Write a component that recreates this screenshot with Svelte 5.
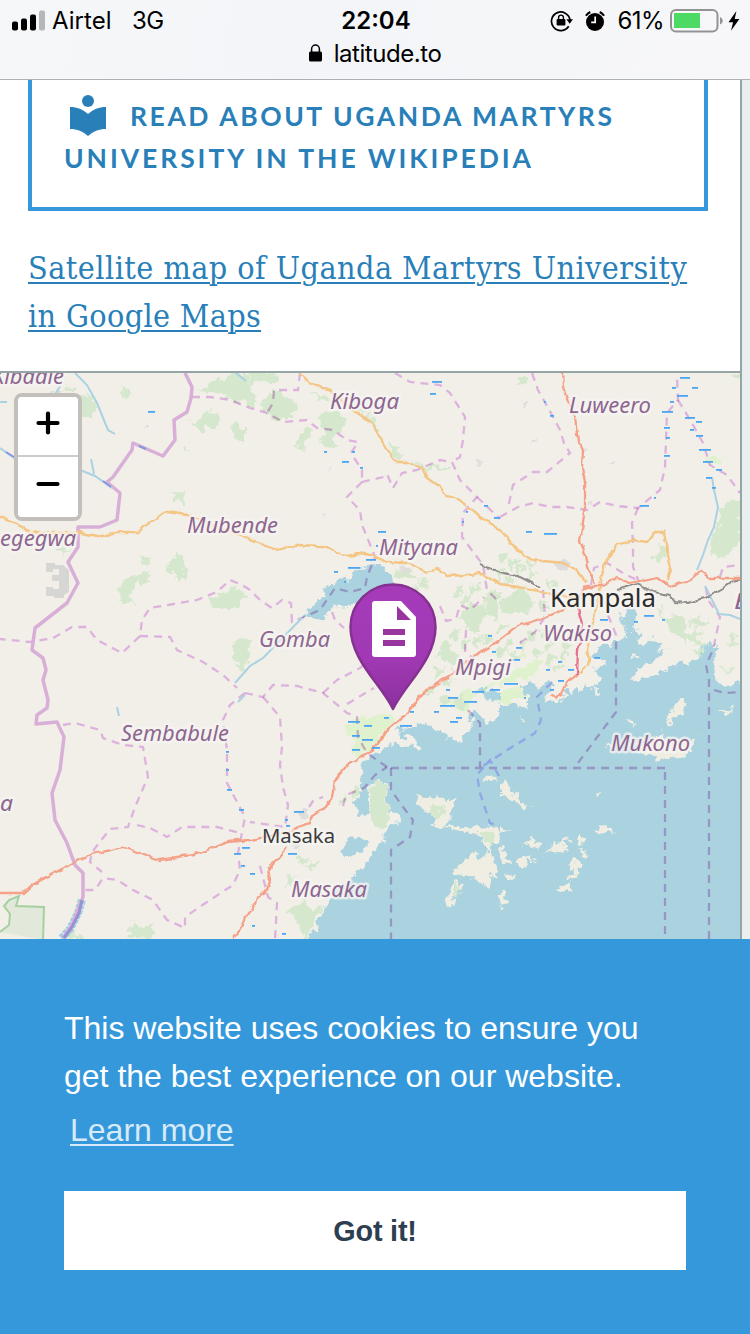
<script>
  const water = [
    '313,939 317,923 328,902 339,889 350,880 367,863 383,840 393,823 402,822 400,815 388,810 386,797 385,782 378,778 368,787 368,800 371,812 360,815 356,803 361,790 360,780 362,763 375,753 382,747 397,745 411,748 420,747 413,737 400,737 398,728 412,727 423,723 430,727 437,730 450,738 462,740 472,728 468,713 474,709 480,712 487,725 500,713 500,705 512,704 527,707 527,698 522,688 527,680 535,682 538,690 550,677 555,687 543,698 548,702 558,702 567,692 575,685 580,693 587,683 593,688 595,697 600,693 592,687 603,680 593,670 607,663 598,658 593,658 603,643 612,644 623,640 626,630 620,622 628,608 637,610 633,630 640,632 638,643 644,644 653,638 662,647 650,658 635,654 632,659 645,654 667,652 660,656 653,663 637,668 632,682 647,678 663,670 673,665 687,663 698,655 700,647 710,641 718,650 712,663 717,685 730,687 740,680 740,939',
    '383,567 392,575 394,590 360,602 350,607 334,606 330,610 327,618 302,618 318,600 333,583 342,578 347,580 357,570 370,566',
    '356,837 368,840 367,848 356,855 345,856 342,849 348,839',
    '362,791 368,800 371,812 362,815 356,806',
    '484,688 500,694 500,704 486,698 476,692'
  ];
  const islands = [
    '416,795 426,797 437,795 445,800 452,800 460,796 455,806 449,811 450,821 447,826 468,826 480,829 491,826 499,831 500,841 492,842 490,852 493,859 498,878 492,876 487,888 484,884 477,881 470,876 457,875 454,870 464,860 473,857 478,850 481,862 487,851 484,840 476,832 463,833 447,827 430,827 436,822 431,812 421,808',
    '457,878 464,889 455,888 452,906 444,901 449,890',
    '500,782 508,783 514,791 520,802 529,804 528,810 520,808 510,798 500,796',
    '528,834 540,846 539,847 532,846 521,845 532,842',
    '551,840 557,844 568,838 570,840 562,845 570,849 558,851 545,854 553,848',
    '580,832 585,840 582,846 578,842', '598,829 604,826 613,828 612,834 606,831 599,835',
    '579,850 588,854 598,843 590,852 584,857', '577,857 584,864 577,869 578,880 567,879 572,869 566,866 574,864',
    '555,891 565,884 571,882 568,892 556,892', '518,860 528,856 537,861 526,861 523,869 518,865',
    '504,876 518,873 513,881 504,880', '500,824 509,832 500,834', '500,844 507,855 509,864 501,863',
    '500,892 508,892 503,908 500,906', '594,794 599,793 605,798 595,796',
    '681,699 689,703 683,707 684,715 675,718 670,727 666,714 672,714 673,705',
    '662,730 668,740 691,741 697,738 690,752 677,759 664,757 653,759 641,753 632,748 655,742', '604,745 613,744 611,748',
    '720,711 735,706 732,712 722,713', '628,720 634,721 637,725 631,724', '517,720 524,718 526,720 520,721',
    '483,780 490,775 497,780 490,783'
  ];
  const forest = [
    '196,389 210,384 221,378 231,374 249,373 251,398 240,404 228,396 215,394 205,393',
    '191,422 200,419 208,412 214,411 219,422 213,428 206,425 202,433 194,425',
    '232,426 239,423 243,427 249,427 239,442 232,434', '250,373 281,373 272,383 257,380 250,386',
    '265,396 274,390 297,402 294,413 280,423 270,415 262,407', '250,390 258,402 256,409 250,408', '310,391 328,395 330,403 320,398',
    '317,420 323,413 341,412 345,422 341,432 333,439 338,446 329,449 318,440 326,432 322,426',
    '302,427 312,430 308,442 303,448 296,446', '356,407 368,414 379,430 377,434 364,417', '388,443 400,450 399,461 391,455',
    '412,462 430,466 444,467 454,465 451,470 425,470', '78,396 87,393 97,402 92,415 81,419', '66,386 73,385 74,389 65,392',
    '119,389 125,391 131,389 130,395 124,397', '183,447 187,445 189,450 184,451', '172,493 186,492 183,497 184,506 178,500 172,501',
    '177,551 184,561 186,582 177,577 165,568 172,561', '122,582 130,576 149,573 147,584 138,582 131,590 133,605 120,600',
    '140,556 147,556 151,565 141,562', '209,597 221,594 236,586 246,595 240,608 229,611 213,609',
    '232,643 250,638 250,662 241,659 233,650', '234,650 250,650 243,672 237,664', '54,547 70,549 66,552 54,551',
    '738,500 728,502 720,512 719,525 711,538 709,550 720,557 735,549 740,540 740,500', '732,373 740,373 740,380 733,377',
    '658,543 665,549 665,557 660,560 651,559 658,554', '518,376 526,378 526,384 519,385',
    '500,600 520,588 536,604 528,613 510,614 500,607', '471,604 480,603 490,612 482,622 478,635 468,630 460,615',
    '378,778 385,784 385,799 389,814 388,827 372,824 371,800 368,789', '304,900 311,910 323,907 312,922 310,939 303,939 298,919 287,910',
    '126,937 133,921 143,928 156,924 149,939', '431,806 445,806 440,814 435,820 430,812', '478,832 493,833 493,841 491,847 483,837',
    '456,880 463,890 455,896', '67,939 72,932 85,939', '435,655 450,647 460,655 452,669 445,661',
    '455,700 462,694 467,705 459,711', '690,620 700,616 710,625 695,630', '660,617 680,616 690,625 684,631 700,641 711,644 700,646 675,634',
    '726,643 733,636 739,644 730,648', '569,876 578,871 577,875', '720,667 735,669 728,673',
    '394,568 411,571 420,583 410,579 398,579', '487,604 499,590 496,624 490,618'
  ];
  const marsh = [
    '352,719 390,713 396,720 384,731 374,746 361,756 352,756 354,741 346,730', '452,701 464,690 478,691 493,682 505,674 519,668 540,659 545,663 526,679 507,682 492,686 475,695 468,710 457,710',
    '500,690 521,688 526,699 516,697 508,704 500,701', '706,457 724,459 717,464 706,462', '516,658 523,649 528,658'
  ];
  const wood = [
    [458,590],[467,597],[474,587],[486,600],[492,593],[455,634],[465,642],[446,646],[452,662],[477,641],[488,637],[500,651],[508,642],[513,655],[524,643],[532,634],[537,652],[548,645],[550,659],[556,667],[564,654],[567,645],[545,632],[500,627],[670,620],[681,626],[687,637],[696,634],[503,556],[512,562],[519,568],[530,565],[532,575],[499,572],[507,580],[542,606],[550,582],[424,582],[415,588],[445,699],[431,690],[448,681],[438,671],[343,798],[355,792],[303,860],[312,865],[290,880],[660,610],[699,650]
  ];
  const dashes = [
    '192,397 210,397 230,400 250,408 267,413 283,422 307,420 317,428 333,430 347,440 358,442 351,453 362,470 362,482',
    '300,373 298,390 274,390 273,403 267,413',
    '362,482 383,477 387,474 393,488 402,473 417,470 440,460 452,462 460,480 477,497 463,513 462,537 483,565 487,590 497,600',
    '395,373 410,382 440,385 450,393 465,417 463,440 460,457 452,462', '477,497 500,519',
    '362,482 347,497 360,510 362,525 367,537 375,557 367,577 365,588 350,592 335,588 320,610 292,622 291,603 282,600 272,608 260,600 250,590 242,585 230,580 217,592 197,600 150,608 142,620 140,636 122,653 97,640 87,627 72,627 53,638 30,642 0,639',
    '140,636 170,637 177,650 203,662 223,675 237,688', '332,612 335,620 344,628', '440,606 446,621 456,619 460,605 470,610 484,597',
    '245,693 230,705 223,720 227,750 227,783 245,817 238,853 240,870 233,885 207,902 185,917 185,928 167,920 153,900 133,890 117,880 103,878 95,890 83,890',
    '63,725 75,723 100,730 103,738 123,745 143,747 148,777 135,807 128,827 110,829 92,852 90,862 102,872', '137,825 150,828 167,837 182,827 217,827 240,833',
    '245,693 263,697 273,685 297,686 323,693 347,713 357,717 358,737 367,753 387,767', '323,693 337,680 360,668 372,658', '347,704 374,688',
    '263,697 280,717 282,747 280,765 283,787 288,805 285,827 250,822', '343,806 346,795 364,788 375,775 387,767', '309,807 313,801 323,797', '260,866 268,897 277,903 275,939',
    '391,768 665,768', '391,768 391,790 403,807 413,820 410,837 391,850 391,939', '665,772 665,939', '709,939 709,680 706,665 713,650 720,617 708,600 705,583',
    '608,615 616,635 616,712 595,740 575,767', '468,710 480,723 480,767', '714,690 725,693 740,692',
    '532,373 538,390 552,415 560,430 564,443 570,453 547,472 533,472 513,485 508,508', '500,517 518,507 533,503 550,507 567,507 587,510 600,502 617,506 638,508 660,490 665,467 667,413 678,400 677,377',
    '678,400 692,423 703,443 710,465 727,475 740,493', '638,508 632,523 633,547 633,567 639,582', '591,585 594,568 607,563 623,573 637,580', '543,590 545,617 535,632 517,645', '720,577 723,567 740,565',
    '466,630 465,652 475,660'
  ];
  const blueDashes = ['499,776 490,760 477,775 480,793 490,823 500,826', '552,682 537,697 541,720 535,733 507,750 480,768'];
  const borders = ['185,373 192,387 191,398 187,412 174,420 175,440 163,456 133,443 132,450 113,477 107,482 120,493 117,520 100,527 78,527 78,547 68,562 78,583 67,603 35,628 32,650 43,658 46,670 43,680 48,700 47,708 37,715 36,724 57,722 64,737 60,770 52,793 55,820 67,843 75,865 83,873 83,897 72,925 63,938'];
  const rivers = ['75,373 87,385 97,403 108,430 115,434', '0,448 17,460 50,461 80,470 95,476 112,488', '55,395 60,386', '0,402 7,402', '91,459 94,474', '302,618 263,658 250,666 235,683', '712,477 714,490 718,507 714,527 708,540 703,555 697,570', '238,702 245,695', '117,707 119,716', '705,586 719,614 730,615 740,619', '236,373 246,381'];
  const orange = [
    '300,373 310,383 332,392 353,410 372,423 383,443 395,462 408,462 422,468 427,478 438,486 447,495 457,498 480,517 500,529 517,550 532,560 563,563 577,570 587,583',
    '0,517 17,523 30,533 80,533 103,537 117,532 138,532 150,522 167,512 187,515 205,522 240,535 250,540 278,550 297,545 323,546 347,556 367,553 387,562 407,563 427,572 438,569 447,576 483,574 500,584 523,588 550,594 577,597',
    '600,583 605,563 617,545 633,540 647,542 655,532 664,532 667,550 671,567 667,580', '600,585 597,605 590,635 587,650 590,657 588,665 580,674'
  ];
  const red = [
    '562,373 563,387 568,402 575,417 578,442 583,450 582,467 585,483 585,510 580,542 584,550 587,567 595,583', '583,588 595,585 603,585 617,578 630,583 657,577 670,586 690,580 700,571 710,578 740,578',
    '595,586 583,590 577,603 557,612 543,618 518,626 500,640 475,655 453,674 438,683 423,693 405,715 387,730 370,753 347,765 335,780 332,797 323,810 313,815 310,823 298,827 290,832 250,840 227,842 200,853 160,860 123,847 93,854 73,863 32,885 23,893 0,893',
    '287,848 268,870 270,880 265,892 257,897 255,905 248,912 242,927 232,938', '577,675 567,682 562,693 555,698 551,695'
  ];
  const rail = ['480,565 500,572 520,577 540,587', '617,590 637,584 653,592 670,595 675,602 687,603 707,597 723,588 733,581 740,579'];
  const marks = [
    [432,382,10],[430,394,6],[680,378,10],[692,388,6],[672,388,4],[677,396,11],[670,402,4],[662,412,11],[685,418,10],[696,422,6],[664,428,6],[690,430,4],[696,436,7],[666,438,4],[699,450,12],[703,462,10],[664,456,6],[716,470,6],[706,478,6],[712,488,4],[640,506,9],[654,498,2],[544,402,2],[550,416,4],[544,534,13],[526,532,6],[484,506,4],[494,518,6],[466,512,2],[462,522,2],[378,532,8],[376,546,2],[366,560,10],[348,568,12],[334,572,4],[344,582,2],[352,452,3],[342,462,7],[360,468,3],[324,452,3],[148,412,7],[644,616,10],[634,622,4],[600,620,8],[662,620,3],[738,606,4],[488,636,4],[492,652,4],[516,648,6],[512,660,8],[504,684,14],[472,692,12],[464,702,13],[448,698,10],[440,706,15],[434,712,5],[456,718,6],[450,722,8],[410,712,4],[384,718,5],[348,722,12],[364,726,8],[352,736,8],[362,740,11],[352,750,8],[372,748,8],[400,726,12],[446,690,4],[490,690,10],[546,670,4],[558,662,4],[568,670,6],[550,690,4],[558,681,6],[524,698,2],[594,658,6],[294,812,10],[285,820,3],[286,826,4],[288,854,9],[234,854,7],[242,848,8],[241,866,4],[226,752,3],[226,770,3],[227,790,5],[239,810,5],[250,874,5],[252,926,3],[282,934,4]
  ];
  const towns = [[57,393,8],[145,428,5],[404,570,10],[330,468,4],[324,514,4],[478,463,6],[524,405,5],[585,451,5],[590,503,5],[562,567,16],[303,815,12],[296,842,14],[612,463,4],[535,442,4]];
  const labels = [
    ['Kibadie', -8, 384, 72, 'd'], ['Kiboga', 330, 409, 69, 'd'], ['Luweero', 569, 413, 82, 'd'], ['Mubende', 187, 533, 91, 'd'],
    ['Mityana', 379, 555, 79, 'd'], ['egegwa', 0, 546, 76, 'd'], ['Gomba', 259, 647, 71, 'd'], ['Wakiso', 543, 641, 69, 'd'],
    ['Mpigi', 455, 675, 56, 'd'], ['Sembabule', 121, 741, 108, 'd'], ['Mukono', 611, 751, 79, 'd'], ['Masaka', 291, 897, 76, 'd'],
    ['a', 0, 811, 13, 'd'], ['B', 734, 609, 16, 'd'], ['Kampala', 550, 607, 106, 'city'], ['Masaka', 262, 843, 73, 'town']
  ];
</script>

<div class="screen">
  <header>
    <div class="status">
      <div class="carrier">
        <svg width="34" height="22" viewBox="0 0 34 22"><rect x="0" y="11.500" width="6" height="9" rx="2"/><rect x="9" y="8.500" width="6" height="12" rx="2"/><rect x="18" y="4.500" width="6" height="16" rx="2"/><rect x="27" y="0.500" width="6" height="20" rx="2" fill="#b5b7b9"/></svg>
        <span class="airtel">Airtel</span><span class="net">3G</span>
      </div>
      <b class="time">22:04</b>
      <div class="indicators">
        <svg class="lockrot" width="24" height="24" viewBox="0 0 24 24"><path d="M18.7 17.2A9.300 9.300 0 1 1 20 11" fill="none" stroke="#000" stroke-width="1.700"/><path d="M16.400 10.300h6.600l-3.300 4.400z"/><rect x="6.600" y="10" width="8.800" height="6.500" rx="1"/><path d="M8.600 10.500V8.500a2.400 2.400 0 0 1 4.800 0v2" fill="none" stroke="#000" stroke-width="1.400"/></svg>
        <svg class="alarm" width="20" height="22" viewBox="0 0 20 22"><circle cx="10" cy="12" r="9"/><path d="M.9 5.700A10.600 10.600 0 0 1 5.300 2M14.700 2a10.600 10.600 0 0 1 4.400 3.700" fill="none" stroke="#000" stroke-width="2"/><path d="M10.200 6.500v5.800H6.200" fill="none" stroke="#fff" stroke-width="1.700"/></svg>
        <span class="percent">61%</span>
        <svg class="battery" width="54" height="24" viewBox="0 0 54 24"><rect x="1" y="1" width="46.500" height="21.500" rx="5" fill="none" stroke="#929395" stroke-width="2"/><rect x="4" y="4" width="26" height="15" fill="#4cd964"/><path d="M50 8c3.600 1.800 3.600 6 0 7.500z" fill="#929395"/></svg>
        <svg class="bolt" width="12" height="20" viewBox="0 0 12 20"><path d="M8.400 0L.5 11.200h4.600L3 19.700 11.400 8H6.700z"/></svg>
      </div>
    </div>
    <div class="address">
      <svg width="13" height="18" viewBox="0 0 13 18"><rect y="7.500" width="13" height="10" rx="1.600"/><path d="M2.600 8V5a3.900 3.900 0 0 1 7.800 0v3" fill="none" stroke="#000" stroke-width="1.500"/></svg>
      <span>latitude.to</span>
    </div>
  </header>

  <main>
    <a class="wiki" href="#wiki">
      <span class="line first"><svg width="36" height="41" viewBox="0 0 36 41"><circle cx="18" cy="6" r="6"/><path d="M0 12c7 0 13 2.500 18 7 5-4.500 11-7 18-7v22c-7 0-13 2.500-18 7-5-4.500-11-7-18-7z"/></svg><span class="w1">READ ABOUT UGANDA MARTYRS</span></span>
      <span class="line w2">UNIVERSITY IN THE WIKIPEDIA</span>
    </a>
    <a class="satellite" href="#map"><span class="s1">Satellite map of Uganda Martyrs University</span><br /><span class="s2">in Google Maps</span></a>

    <section class="map">
      <svg class="tiles" width="740" height="566" viewBox="0 373 740 566">
        <defs>
          <linearGradient id="pin" x2="0" y2="1"><stop stop-color="#a63bba"/><stop offset="0.6" stop-color="#a039b3"/><stop offset="1" stop-color="#8d309e"/></linearGradient>
          <filter id="rough" filterUnits="userSpaceOnUse" x="-10" y="363" width="760" height="600"><feTurbulence type="fractalNoise" baseFrequency="0.13" numOctaves="3" seed="4"/><feDisplacementMap in="SourceGraphic" scale="13" xChannelSelector="R" yChannelSelector="G"/></filter>
          <filter id="wobble" filterUnits="userSpaceOnUse" x="-10" y="363" width="760" height="600"><feTurbulence type="fractalNoise" baseFrequency="0.12" numOctaves="2" seed="9"/><feDisplacementMap in="SourceGraphic" scale="5" xChannelSelector="R" yChannelSelector="G"/></filter>
          <clipPath id="frame"><rect y="373" width="740" height="566"/></clipPath>
        </defs>
        <rect y="373" width="740" height="566" fill="#f2efe9"/>
        <g clip-path="url(#frame)">
          <g filter="url(#rough)">
            {#each marsh as p}<polygon points={p} fill="#e0f2cd"/>{/each}
            {#each water as p}<polygon points={p} fill="#aad3df"/>{/each}
            <path d="M312 936H750V960H304zM738 680h12v260h-12z" fill="#aad3df"/>
            {#each islands as p}<polygon points={p} fill="#f0eee2"/>{/each}
            {#each forest as p}<polygon points={p} fill="#d5e8cd"/>{/each}
            {#each wood as [x, y]}<path d="M{x - 4} {y}l3-4 3 3 4-3-2 6-3 1-1 5-3-3z" fill="#d5e8cd"/>{/each}
            {#each towns as [x, y, s]}<path d="M{x - s / 2} {y - s / 4}h{s / 3}v-{s / 5}h{s / 3}l{s / 3} {s / 4}-{s / 4} {s / 2}h-{s / 2}z" fill="#dfdddb"/>{/each}
          </g>
          <path d="M46 563h9v2h8l6 5v22l-5 3v3H54v-2h-8v-9h7v2h6v-8h-7v-6h7v-6h-6v3h-7z" fill="#d6d6d5"/>
          <path d="M0 932l9-7 1-11-6-8 5-6 10-4-3 10 28 1-1 33" fill="#e3e9da" stroke="#a7d0a0" stroke-width="2"/>
          <path d="M82 900l-4 13-8 16-9 10" fill="none" stroke="#a0cfe0" stroke-width="8" stroke-dasharray="4 1"/>
          {#each dashes as p}<polyline points={p} class="dash"/>{/each}
          {#each blueDashes as p}<polyline points={p} class="dash blue"/>{/each}
          {#each borders as p}<polyline points={p} class="border"/>{/each}
          {#each rivers as p}<polyline points={p} class="river"/>{/each}
          <path d="M82 900l-3 13-7 14-8 11" fill="none" stroke="#9a90d6" stroke-width="3"/>
          <path d="M139 446l7 3M6 452l8 5M103 481l8 6" stroke="#8896df" stroke-width="2"/>
          <g filter="url(#wobble)">
            {#each rail as p}<polyline points={p} class="rail"/>{/each}
            {#each orange as p}<polyline points={p} class="road" stroke="#f4c583"/>{/each}
            {#each red as p}<polyline points={p} class="road" stroke="#f4a188" stroke-width="2.800"/>{/each}
            <polyline points="578,608 582,625 580,645 578,650 577,675" class="road" stroke="#e8718d" stroke-width="3"/>
          </g>
          {#each marks as [x, y, w]}<rect {x} y={y - 1} width={w} height="1.800" fill="#4aa6f4"/>{/each}
        </g>
        {#each labels as [text, x, y, w, kind]}
          <text {x} {y} textLength={w} lengthAdjust="spacingAndGlyphs" class={kind}>{text}</text>
        {/each}
        <path d="M393 709C381 684 350.500 660 350.500 627A42.500 42.500 0 0 1 435.500 627C435.500 660 405 684 393 709Z" fill="url(#pin)" stroke="#85318f" stroke-width="2.500" stroke-linejoin="round"/>
        <path d="M375 601h26l15 16v37a3 3 0 0 1-3 3h-38a3 3 0 0 1-3-3v-50a3 3 0 0 1 3-3z" fill="#fff"/>
        <path d="M397 606v14h14zM383 629h22v6h-22zM383 640h22v6h-22z" fill="#98359f"/>
      </svg>
      <div class="zoom">
        <button aria-label="Zoom in"><svg width="24" height="24" viewBox="0 0 24 24"><path d="M12 2.500v19M2.500 12h19"/></svg></button>
        <button aria-label="Zoom out"><svg width="24" height="24" viewBox="0 0 24 24"><path d="M2.500 12h19"/></svg></button>
      </div>
    </section>
  </main>

  <footer>
    <p>This website uses cookies to ensure you<br />get the best experience on our website.</p>
    <a class="learn" href="#more">Learn more</a>
    <button class="accept">Got it!</button>
  </footer>
</div>

<style>
  :global(body) { background: #ecf0f1; overflow: hidden; }
  * { box-sizing: border-box; }
  .screen { width: 750px; height: 1334px; display: flex; flex-direction: column; background: #e9eeef; overflow: hidden; }
  header { height: 80px; flex: none; background: linear-gradient(100deg, #f6f7f9, #f3f5f8 40%, #f7f7f9); border-bottom: 1px solid #aeb1b4; font-family: Inter, sans-serif; color: #000; }
  .status { height: 40px; display: grid; grid-template-columns: 1fr auto 1fr; align-items: center; padding: 1px 10px 0 12px; font-size: 24px; }
  .carrier, .indicators { display: flex; align-items: center; }
  .indicators { justify-content: flex-end; }
  .airtel { margin-left: 6px; letter-spacing: 0.05px; width: 80px; }
  .net { letter-spacing: -0.5px; }
  .time { font-weight: 600; letter-spacing: 0; }
  .alarm { margin-left: 11px; }
  .percent { margin-left: 13px; letter-spacing: -0.600px; }
  .battery { margin-left: 6px; }
  .bolt { margin-left: 4px; }
  .address { display: flex; justify-content: center; align-items: center; height: 26px; font-size: 24px; letter-spacing: -0.450px; }
  .address svg { margin-right: 12px; }

  main { width: 742px; height: 859px; flex: none; background: #fff; border-right: 2px solid #95a5a6; }
  a { color: #2980b9; }
  .wiki { display: block; margin: 0 0 0 28px; width: 680px; height: 131px; border: 4px solid #3498db; border-top: 0; padding: 15px 0 0 32px; text-decoration: none; font: 700 26.500px/42px Lato, sans-serif; white-space: nowrap; }
  .line { display: flex; height: 42px; }
  .first svg { margin: 0 25px 0 6px; flex: none; fill: #2980b9; }
  .first .w1 { margin-left: -1px; }
  .w1 { letter-spacing: 2.560px; }
  .w2 { letter-spacing: 2.920px; }
  .satellite { display: block; height: 160px; padding: 33px 0 0 28px; font: 32px/48px "Roboto Slab", "DejaVu Serif Condensed", "DejaVu Serif", serif; font-stretch: condensed; text-decoration-thickness: 2px; text-underline-offset: 3px; white-space: nowrap; }
  .s1 { letter-spacing: 0.460px; }
  .s2 { letter-spacing: 0.350px; }

  .map { position: relative; height: 568px; border-top: 2px solid #95a5a6; }
  .tiles { display: block; }
  .dash { fill: none; stroke: #d9a8dc; stroke-opacity: 0.85; stroke-width: 2.300; stroke-dasharray: 8 6; mix-blend-mode: multiply; }
  .dash.blue { stroke: #8b9fe8; mix-blend-mode: normal; }
  .border { fill: none; stroke: #d8afd6; stroke-width: 3.500; stroke-linejoin: round; }
  .river { fill: none; stroke: #a9d2e2; stroke-width: 2; }
  .rail { fill: none; stroke: #8e8d8b; stroke-width: 2; }
  .road { fill: none; stroke-width: 2.300; stroke-linejoin: round; }
  text { font-family: "Noto Sans", sans-serif; paint-order: stroke; stroke: #f7f5f2; stroke-opacity: 0.75; stroke-width: 5px; stroke-linejoin: round; }
  .d { font-size: 21.500px; font-style: italic; fill: #8d6690; }
  .city { font-size: 25px; fill: #2b2b2b; }
  .town { font-size: 19.500px; fill: #3c3c3c; }
  .zoom { position: absolute; left: 14px; top: 20px; width: 68px; height: 128px; border: 4px solid #c3bfba; border-radius: 8px; overflow: hidden; background: #fff; }
  .zoom button { display: flex; align-items: center; justify-content: center; width: 60px; height: 60px; padding: 0 0 7px; border: 0; background: #fff; }
  .zoom button:first-child { border-bottom: 2px solid #ccc; }
  .zoom path { stroke: #000; stroke-width: 4.200; stroke-linecap: round; }

  footer { flex: 1; background: #3598db; padding: 65px 64px 0; color: #fff; font: 32px/48px "Liberation Sans", Arial, sans-serif; }
  p { margin: 0; white-space: nowrap; }
  .learn { display: block; width: max-content; margin: 6px 0 0 6px; color: #d7eaf8; text-decoration-thickness: 2px; text-underline-offset: 3px; }
  .accept { display: block; width: 622px; height: 79px; margin: 37px 0 0; padding: 2px 0 0; border: 0; background: #fff; color: #2c3e50; font: 700 28.800px "Liberation Sans", Arial, sans-serif; letter-spacing: -0.2px; }
</style>
